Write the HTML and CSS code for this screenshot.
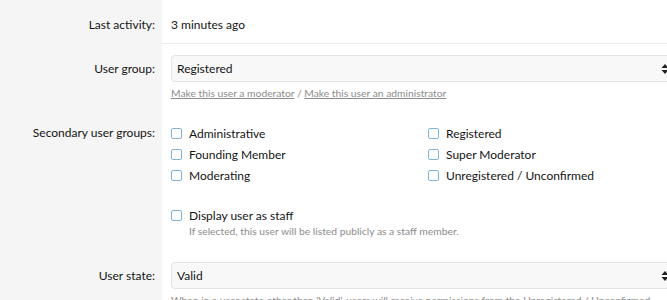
FILE: index.html
```html
<!DOCTYPE html>
<html lang="en">
<head>
    <meta charset="UTF-8">
    <title>Edit user</title>
    <link rel="stylesheet" href="styles.css">
</head>
<body>
    <div class="form">
        <dl class="form-row form-row--sep">
            <dt>Last activity:</dt>
            <dd><span class="value">3 minutes ago</span></dd>
        </dl>

        <dl class="form-row form-row--input">
            <dt>User group:</dt>
            <dd>
                <div class="select">
                    <span>Registered</span>
                    <svg class="select-arrow" width="8" height="12" viewBox="0 0 8 12"><path d="M4 1 L7.5 5 H0.5 Z M4 11 L7.5 7 H0.5 Z" fill="#222"/></svg>
                </div>
                <div class="explain">
                    <a href="#">Make this user a moderator</a> / <a href="#">Make this user an administrator</a>
                </div>
            </dd>
        </dl>

        <dl class="form-row form-row--checks">
            <dt>Secondary user groups:</dt>
            <dd>
                <ul class="check-grid">
                    <li><span class="box"></span>Administrative</li>
                    <li><span class="box"></span>Registered</li>
                    <li><span class="box"></span>Founding Member</li>
                    <li><span class="box"></span>Super Moderator</li>
                    <li><span class="box"></span>Moderating</li>
                    <li><span class="box"></span>Unregistered / Unconfirmed</li>
                </ul>
                <div class="check-single">
                    <div class="check-line"><span class="box"></span>Display user as staff</div>
                    <div class="hint">If selected, this user will be listed publicly as a staff member.</div>
                </div>
            </dd>
        </dl>

        <dl class="form-row form-row--input">
            <dt>User state:</dt>
            <dd>
                <div class="select">
                    <span>Valid</span>
                    <svg class="select-arrow" width="8" height="12" viewBox="0 0 8 12"><path d="M4 1 L7.5 5 H0.5 Z M4 11 L7.5 7 H0.5 Z" fill="#222"/></svg>
                </div>
                <div class="explain">When in a user state other than 'Valid', users will receive permissions from the Unregistered / Unconfirmed</div>
            </dd>
        </dl>
    </div>
</body>
</html>
```

FILE: styles.css
```css
* {
    margin: 0;
    padding: 0;
    box-sizing: border-box;
}

html, body {
    overflow: hidden;
}

body {
    font-family: Lato, 'Liberation Sans', sans-serif;
    font-size: 12px;
    color: #141414;
    background: #fff;
}

.form {
    width: 676px;
}

.form-row {
    display: grid;
    grid-template-columns: 162px 1fr;
}

.form-row dt {
    background: #f5f5f5;
    text-align: right;
    padding-right: 7px;
    line-height: 18px;
}

.form-row dd {
    padding-left: 9px;
}

/* Last activity */
.form-row--sep dt {
    padding-top: 16px;
}

.form-row--sep dd {
    padding-top: 16px;
    padding-bottom: 9px;
    line-height: 18px;
    border-bottom: 1px solid #ececec;
}

/* rows with a select */
.form-row--input dt {
    padding-top: 16px;
}

.form-row--input dd {
    padding-top: 11px;
    padding-bottom: 10px;
}

.select {
    position: relative;
    height: 27px;
    line-height: 25px;
    padding: 0 5px;
    background: #f8f8f8;
    border: 1px solid #e4e4e4;
    border-radius: 4px;
}

.select-arrow {
    position: absolute;
    right: 6px;
    top: 7px;
}

.explain {
    margin-top: 4px;
    font-size: 10.3px;
    line-height: 14px;
    color: #8c8c8c;
    white-space: nowrap;
}

.explain a {
    color: #8c8c8c;
    text-decoration: underline;
}

/* secondary groups */
.form-row--checks dt {
    padding-top: 14px;
}

.form-row--checks dd {
    padding-top: 14px;
    padding-bottom: 13px;
}

.check-grid {
    list-style: none;
    display: grid;
    grid-template-columns: 257px 257px;
    grid-auto-rows: 18px;
    row-gap: 3px;
}

.check-grid li,
.check-line {
    display: flex;
    align-items: center;
    height: 18px;
}

.box {
    width: 11px;
    height: 11px;
    border: 1px solid #7fb4d8;
    border-radius: 2px;
    margin-right: 7px;
    flex-shrink: 0;
}

.check-single {
    margin-top: 22px;
}

.hint {
    padding-left: 18px;
    font-size: 10.3px;
    line-height: 14px;
    color: #8c8c8c;
}
```
